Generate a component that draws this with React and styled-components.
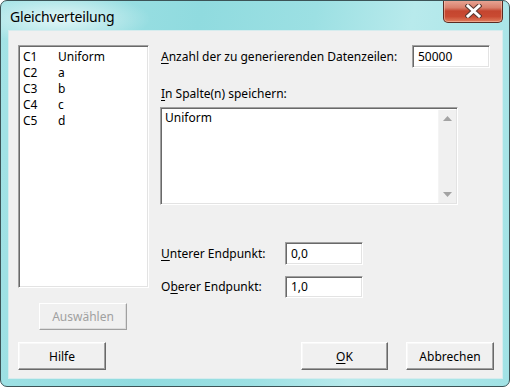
import React from "react";
import styled, { createGlobalStyle } from "styled-components";

const Global = createGlobalStyle`
  html, body { margin: 0; padding: 0; background: #ffffff; }
  body { font-family: "Noto Sans", "Open Sans", sans-serif; }
`;

const Window = styled.div`
  box-sizing: border-box;
  width: 510px;
  height: 387px;
  display: flex;
  flex-direction: column;
  border: 1px solid #3c5457;
  border-radius: 7px;
  overflow: hidden;
  background:
    radial-gradient(ellipse 90px 26px at 60px 18px, rgba(255,255,255,0.7), rgba(255,255,255,0) 100%),
    linear-gradient(100deg, #a4e3e6 0%, #90dbdf 35%, #9ce0e3 55%, #b8eaec 72%, #a1e2e5 100%);
`;

const TitleBar = styled.div`
  height: 29px;
  display: flex;
  align-items: flex-start;
  justify-content: space-between;
  flex-shrink: 0;
`;

const Title = styled.div`
  margin: 6px 0 0 9px;
  font-size: 14px;
  letter-spacing: -0.2px;
  line-height: 20px;
  color: #000;
`;

const CloseButton = styled.div`
  box-sizing: border-box;
  width: 60px;
  height: 23px;
  margin: -1px 6px 0 0;
  border: 1px solid #5b2b22;
  border-top: none;
  border-radius: 0 0 5px 5px;
  background: linear-gradient(#e9a898 0%, #d9806c 35%, #c4452f 50%, #c94a32 75%, #e07f5f 100%);
  box-shadow: inset 0 0 0 1px rgba(255, 220, 200, 0.45);
  display: flex;
  align-items: center;
  justify-content: center;
`;

const Client = styled.div`
  box-sizing: border-box;
  flex: 1;
  margin: 0 6px 7px 7px;
  border: 1px solid #d6ecee;
  background: #f0f0f0;
  display: flex;
  flex-direction: column;
  font-size: 12px;
  color: #000;
`;

const Main = styled.div`
  flex: 1;
  display: flex;
  padding: 14px 0 0 9px;
`;

const LeftCol = styled.div`
  width: 131px;
  display: flex;
  flex-direction: column;
`;

const Sunken = styled.div`
  box-sizing: border-box;
  background: #fff;
  border-style: solid;
  border-width: 1px;
  border-color: #a0a0a0 #ffffff #ffffff #a0a0a0;
  box-shadow: inset 1px 1px 0 #696969, inset -1px -1px 0 #e3e3e3;
`;

const ListBox = styled(Sunken)`
  height: 243px;
  padding: 3px 0 0 4px;
`;

const ListRow = styled.div`
  display: flex;
  line-height: 16px;
  height: 16px;
`;

const ColId = styled.span`
  width: 35px;
`;

const Button = styled.div`
  box-sizing: border-box;
  width: ${(p) => p.$w || 88}px;
  height: ${(p) => p.$h || 28}px;
  margin-left: ${(p) => p.$ml || 0}px;
  margin-top: ${(p) => p.$mt || 0}px;
  display: flex;
  align-items: center;
  justify-content: center;
  background: #f0f0f0;
  border-style: solid;
  border-width: 1px;
  border-color: ${(p) =>
    p.$disabled ? "#ffffff #a0a0a0 #a0a0a0 #ffffff" : "#ffffff #696969 #696969 #ffffff"};
  box-shadow: ${(p) =>
    p.$disabled
      ? "inset -1px -1px 0 #dcdcdc"
      : "inset -1px -1px 0 #a0a0a0, inset 1px 1px 0 #f8f8f8"};
  color: ${(p) => (p.$disabled ? "#a0a0a0" : "#000")};
  font-size: 12px;
`;

const RightCol = styled.div`
  margin-left: 11px;
  width: 330px;
  display: flex;
  flex-direction: column;
`;

const FieldRow = styled.div`
  display: flex;
  align-items: center;
  height: 23px;
  margin-top: ${(p) => p.$mt || 0}px;
`;

const Label = styled.span`
  padding-left: 1px;
  width: ${(p) => (p.$w ? `${p.$w}px` : "auto")};
  flex: ${(p) => (p.$grow ? 1 : "none")};
  line-height: 16px;
`;

const Key = styled.span`
  text-decoration: underline;
  text-underline-offset: 2px;
`;

const Input = styled(Sunken)`
  width: 78px;
  height: ${(p) => p.$h || 23}px;
  padding: 0 5px;
  display: flex;
  align-items: center;
  line-height: 16px;
`;

const SectionLabel = styled.div`
  margin-top: 18px;
  margin-bottom: 5px;
  padding-left: 1px;
  line-height: 16px;
`;

const TextArea = styled(Sunken)`
  width: 298px;
  height: 98px;
  display: flex;
`;

const TextBody = styled.div`
  flex: 1;
  padding: 2px 0 0 4px;
  line-height: 16px;
`;

const ScrollBar = styled.div`
  width: 17px;
  margin: 2px 1px 1px 0;
  background: #f0f0f0;
  border-left: 1px solid #f4f4f4;
  display: flex;
  flex-direction: column;
  justify-content: space-between;
  align-items: center;
  padding: 6px 0 6px;
`;

const Footer = styled.div`
  display: flex;
  align-items: flex-end;
  padding: 0 8px 8px 9px;
`;

const Spacer = styled.div`
  flex: 1;
`;

const Arrow = ({ up }) => (
  <svg width="9" height="5" viewBox="0 0 9 5">
    <polygon points={up ? "4.5,0 9,5 0,5" : "0,0 9,0 4.5,5"} fill="#a3a3a3" />
  </svg>
);

const CloseX = () => (
  <svg width="17" height="14" viewBox="0 0 17 14">
    <path d="M3 2 L14 12 M14 2 L3 12" stroke="#5a3a33" strokeWidth="5" strokeLinecap="square" />
    <path d="M3 2 L14 12 M14 2 L3 12" stroke="#ffffff" strokeWidth="3" strokeLinecap="square" />
  </svg>
);

const columns = [
  ["C1", "Uniform"],
  ["C2", "a"],
  ["C3", "b"],
  ["C4", "c"],
  ["C5", "d"],
];

export default function App() {
  return (
    <>
      <Global />
      <Window>
        <TitleBar>
          <Title>Gleichverteilung</Title>
          <CloseButton>
            <CloseX />
          </CloseButton>
        </TitleBar>
        <Client>
          <Main>
            <LeftCol>
              <ListBox>
                {columns.map(([id, name]) => (
                  <ListRow key={id}>
                    <ColId>{id}</ColId>
                    <span>{name}</span>
                  </ListRow>
                ))}
              </ListBox>
              <Button $disabled $ml={21} $mt={15} $h={27}>
                Auswählen
              </Button>
            </LeftCol>
            <RightCol>
              <FieldRow>
                <Label $grow>
                  <Key>A</Key>nzahl der zu generierenden Datenzeilen:
                </Label>
                <Input>50000</Input>
              </FieldRow>
              <SectionLabel>
                <Key>I</Key>n Spalte(n) speichern:
              </SectionLabel>
              <TextArea>
                <TextBody>Uniform</TextBody>
                <ScrollBar>
                  <Arrow up />
                  <Arrow />
                </ScrollBar>
              </TextArea>
              <FieldRow $mt={37}>
                <Label $w={124}>
                  <Key>U</Key>nterer Endpunkt:
                </Label>
                <Input>0,0</Input>
              </FieldRow>
              <FieldRow $mt={10}>
                <Label $w={124}>
                  O<Key>b</Key>erer Endpunkt:
                </Label>
                <Input $h={22}>1,0</Input>
              </FieldRow>
            </RightCol>
          </Main>
          <Footer>
            <Button>Hilfe</Button>
            <Spacer />
            <Button $w={87}>
              <Key>O</Key>K
            </Button>
            <Button $ml={18}>Abbrechen</Button>
          </Footer>
        </Client>
      </Window>
    </>
  );
}
